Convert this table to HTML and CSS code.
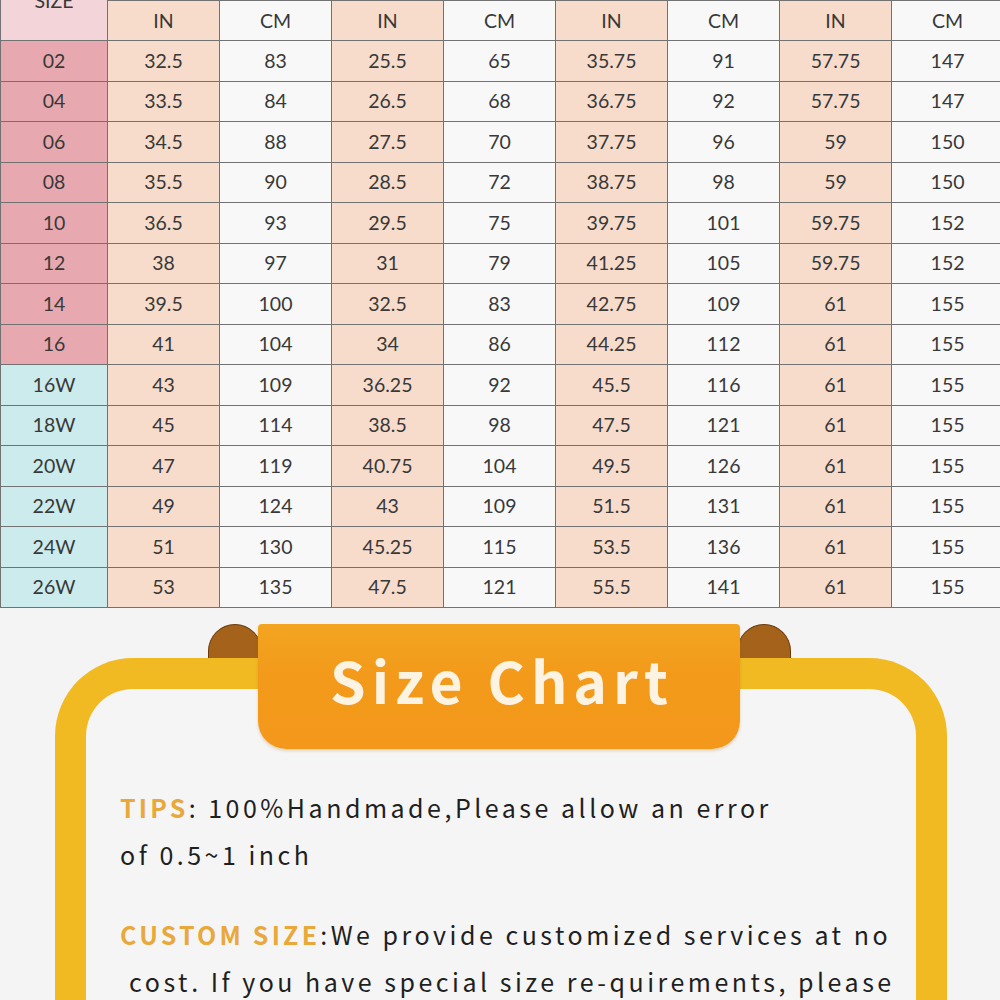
FILE: index.html
```html
<!DOCTYPE html>
<html lang="en">
<head>
<meta charset="utf-8">
<title>Size Chart</title>
<link rel="stylesheet" href="styles.css">
</head>
<body>
<div class="page">
  <table class="sizes">
    <colgroup>
      <col class="c-size"><col class="c-val"><col class="c-val"><col class="c-val"><col class="c-val"><col class="c-val"><col class="c-val"><col class="c-val"><col class="c-val">
    </colgroup>
    <thead>
      <tr class="h-top">
        <th rowspan="2" class="sz-head">SIZE</th>
        <th colspan="2" class="grp">BUST</th>
        <th colspan="2" class="grp">WAIST</th>
        <th colspan="2" class="grp">HIPS</th>
        <th colspan="2" class="grp">HOLLOW TO FLOOR</th>
      </tr>
      <tr class="h-unit">
        <th class="in">IN</th><th class="cm">CM</th>
        <th class="in">IN</th><th class="cm">CM</th>
        <th class="in">IN</th><th class="cm">CM</th>
        <th class="in">IN</th><th class="cm">CM</th>
      </tr>
    </thead>
    <tbody>
      <tr><td class="sz std">02</td><td class="in">32.5</td><td class="cm">83</td><td class="in">25.5</td><td class="cm">65</td><td class="in">35.75</td><td class="cm">91</td><td class="in">57.75</td><td class="cm">147</td></tr>
      <tr><td class="sz std">04</td><td class="in">33.5</td><td class="cm">84</td><td class="in">26.5</td><td class="cm">68</td><td class="in">36.75</td><td class="cm">92</td><td class="in">57.75</td><td class="cm">147</td></tr>
      <tr><td class="sz std">06</td><td class="in">34.5</td><td class="cm">88</td><td class="in">27.5</td><td class="cm">70</td><td class="in">37.75</td><td class="cm">96</td><td class="in">59</td><td class="cm">150</td></tr>
      <tr><td class="sz std">08</td><td class="in">35.5</td><td class="cm">90</td><td class="in">28.5</td><td class="cm">72</td><td class="in">38.75</td><td class="cm">98</td><td class="in">59</td><td class="cm">150</td></tr>
      <tr><td class="sz std">10</td><td class="in">36.5</td><td class="cm">93</td><td class="in">29.5</td><td class="cm">75</td><td class="in">39.75</td><td class="cm">101</td><td class="in">59.75</td><td class="cm">152</td></tr>
      <tr><td class="sz std">12</td><td class="in">38</td><td class="cm">97</td><td class="in">31</td><td class="cm">79</td><td class="in">41.25</td><td class="cm">105</td><td class="in">59.75</td><td class="cm">152</td></tr>
      <tr><td class="sz std">14</td><td class="in">39.5</td><td class="cm">100</td><td class="in">32.5</td><td class="cm">83</td><td class="in">42.75</td><td class="cm">109</td><td class="in">61</td><td class="cm">155</td></tr>
      <tr><td class="sz std">16</td><td class="in">41</td><td class="cm">104</td><td class="in">34</td><td class="cm">86</td><td class="in">44.25</td><td class="cm">112</td><td class="in">61</td><td class="cm">155</td></tr>
      <tr><td class="sz plus">16W</td><td class="in">43</td><td class="cm">109</td><td class="in">36.25</td><td class="cm">92</td><td class="in">45.5</td><td class="cm">116</td><td class="in">61</td><td class="cm">155</td></tr>
      <tr><td class="sz plus">18W</td><td class="in">45</td><td class="cm">114</td><td class="in">38.5</td><td class="cm">98</td><td class="in">47.5</td><td class="cm">121</td><td class="in">61</td><td class="cm">155</td></tr>
      <tr><td class="sz plus">20W</td><td class="in">47</td><td class="cm">119</td><td class="in">40.75</td><td class="cm">104</td><td class="in">49.5</td><td class="cm">126</td><td class="in">61</td><td class="cm">155</td></tr>
      <tr><td class="sz plus">22W</td><td class="in">49</td><td class="cm">124</td><td class="in">43</td><td class="cm">109</td><td class="in">51.5</td><td class="cm">131</td><td class="in">61</td><td class="cm">155</td></tr>
      <tr><td class="sz plus">24W</td><td class="in">51</td><td class="cm">130</td><td class="in">45.25</td><td class="cm">115</td><td class="in">53.5</td><td class="cm">136</td><td class="in">61</td><td class="cm">155</td></tr>
      <tr><td class="sz plus">26W</td><td class="in">53</td><td class="cm">135</td><td class="in">47.5</td><td class="cm">121</td><td class="in">55.5</td><td class="cm">141</td><td class="in">61</td><td class="cm">155</td></tr>
    </tbody>
  </table>

  <section class="chart">
    <span class="roll roll-left"></span>
    <span class="roll roll-right"></span>
    <div class="ribbon"><h2 class="ribbon-title">Size Chart</h2></div>
    <div class="frame">
      <div class="notes">
        <p class="note"><strong class="label">TIPS</strong>: 100%Handmade,Please allow an error<br>of 0.5~1 inch</p>
        <p class="note"><strong class="label">CUSTOM SIZE</strong>:We provide customized services at no<br>&nbsp;cost. If you have special size re-quirements, please</p>
      </div>
    </div>
  </section>
</div>
</body>
</html>
```

FILE: styles.css
```css
html, body {
  margin: 0;
  padding: 0;
}

body {
  background: #f4f4f4;
  overflow: hidden;
}

.page {
  width: 1000px;
  height: 1000px;
  overflow: hidden;
}

/* ---------- table ---------- */
.sizes {
  width: 1003px;
  margin-top: -40px;
  border-collapse: collapse;
  table-layout: fixed;
  font-family: Lato, "Open Sans", sans-serif;
  font-size: 19.5px;
  line-height: 22px;
  color: #383838;
  text-align: center;
}

.c-size { width: 107px; }
.c-val { width: 112px; }

.sizes th,
.sizes td {
  border: 1px solid #727272;
  padding: 0;
  font-weight: 400;
}

.h-top th { height: 39px; }
.h-unit th { height: 39px; }
.sizes tbody td { height: 39.5px; }

.sz-head { background: #f3d4d8; }
.grp { background: #f7f7f7; }

.in { background: #f7dccc; }
.cm { background: #f8f8f8; }

.sz.std { background: #e8a8b0; }
.sz.plus { background: #ccebec; }

/* ---------- size chart box ---------- */
.chart {
  position: relative;
  padding: 50px 53px 0 55px;
}

.frame {
  height: 400px;
  border: 31px solid #f1b922;
  border-bottom: 0;
  border-radius: 78px 78px 0 0;
  background: #f5f5f5;
}

.roll {
  position: absolute;
  top: 16px;
  width: 52px;
  height: 33px;
  background: #a4621b;
  border: 1.5px solid #6d3b0b;
  border-bottom: 0;
  border-radius: 27px 27px 0 0;
}

.roll-left { left: 208px; }
.roll-right { left: 737px; }

.ribbon {
  position: absolute;
  top: 16px;
  left: 258px;
  width: 482px;
  height: 125px;
  background: linear-gradient(#f2a521, #f39a1b 40%, #f3981a);
  border-radius: 4px 4px 28px 28px;
  box-shadow: 0 2px 3px rgba(180, 110, 20, 0.25);
  display: flex;
  align-items: center;
  justify-content: center;
  z-index: 2;
}

.ribbon-title {
  margin: 0 0 14px 6px;
  font-family: "Noto Sans CJK SC", "Noto Sans", sans-serif;
  font-weight: 700;
  font-size: 57px;
  letter-spacing: 6px;
  color: #fcf3e2;
  line-height: 1;
}

.notes {
  padding: 95px 0 0 34px;
  font-family: "Noto Sans CJK SC", "Noto Sans", sans-serif;
  font-size: 25px;
  letter-spacing: 3.5px;
  line-height: 47px;
  color: #1f1f1f;
  white-space: nowrap;
}

.note {
  margin: 0 0 33px;
}

.label {
  color: #e9a83a;
  font-weight: 700;
  letter-spacing: 3.2px;
}
```
